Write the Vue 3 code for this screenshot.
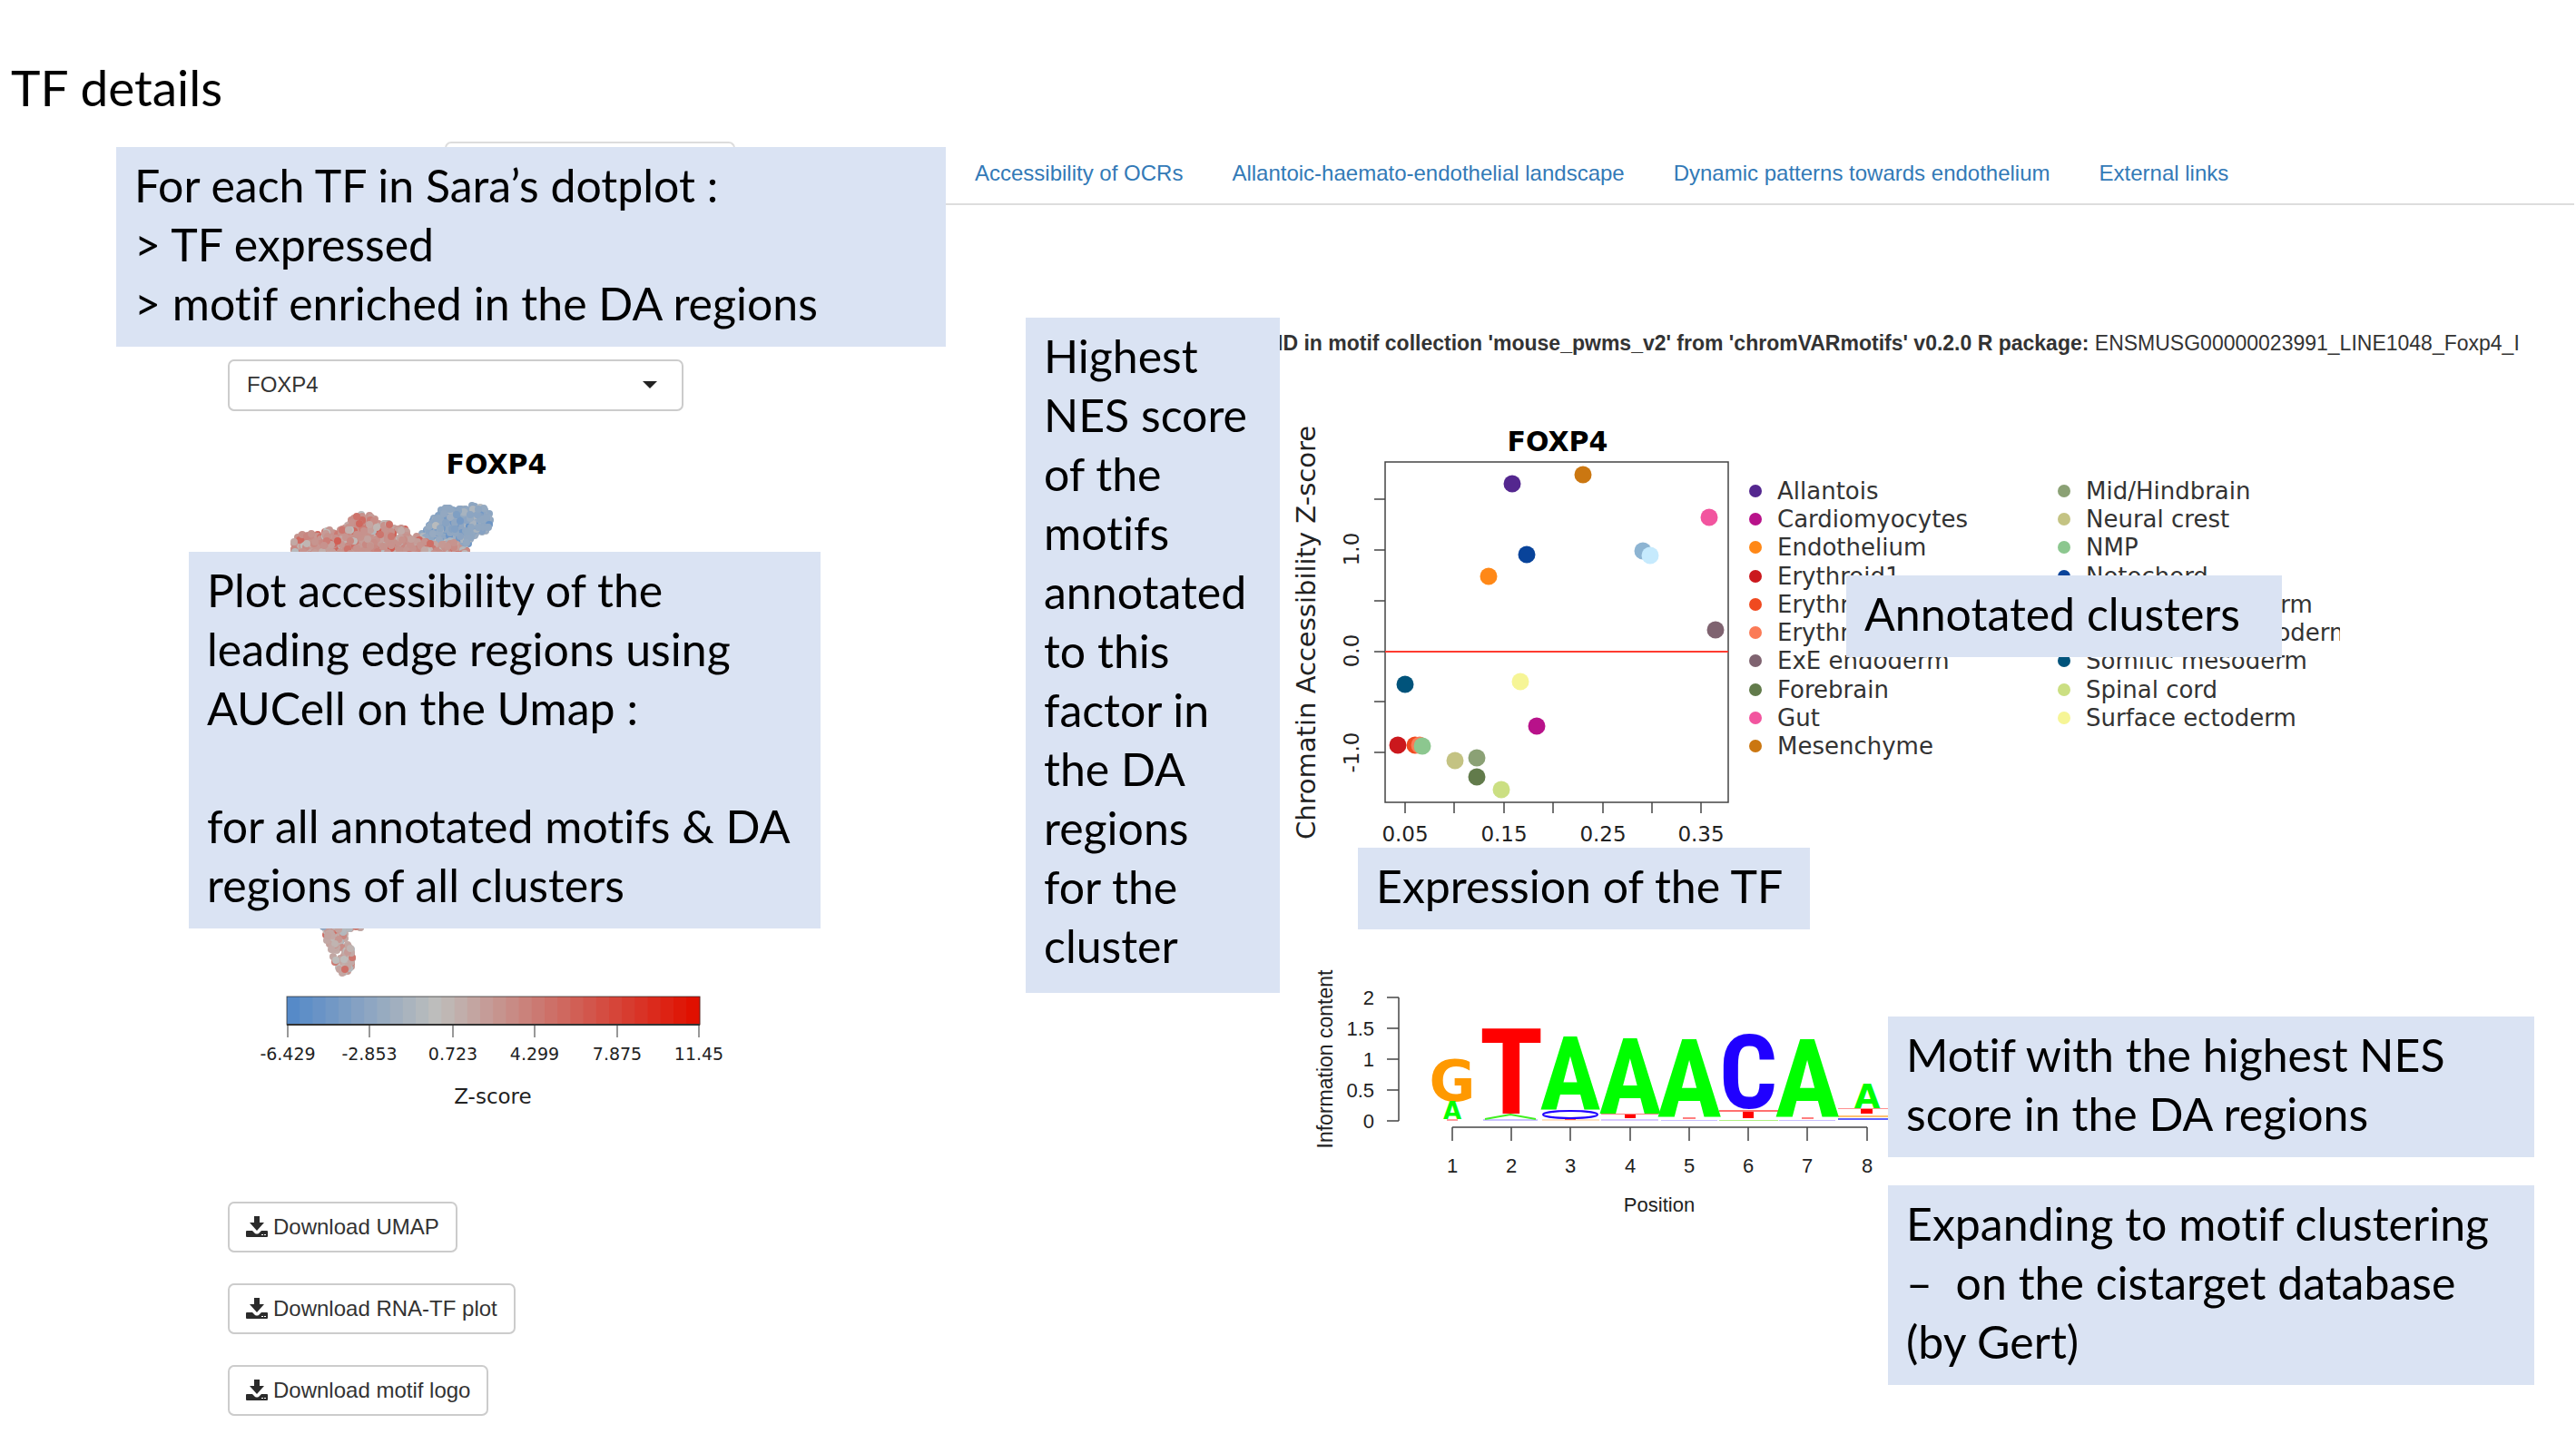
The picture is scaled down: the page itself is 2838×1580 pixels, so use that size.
<script setup>
import { ref } from 'vue'

const factor = ref('FOXP4')
const tabs = [
  'Accessibility of OCRs',
  'Allantoic-haemato-endothelial landscape',
  'Dynamic patterns towards endothelium',
  'External links',
]
const downloads = ['Download UMAP', 'Download RNA-TF plot', 'Download motif logo']

const clusters = [
  { name: 'Allantois', color: '#54278f', x: 1666, y: 533 },
  { name: 'Cardiomyocytes', color: '#b8128a', x: 1693, y: 800 },
  { name: 'Endothelium', color: '#ff8817', x: 1640, y: 635 },
  { name: 'Erythroid1', color: '#cb181d', x: 1540, y: 821 },
  { name: 'Erythroid2', color: '#f04a20', x: 1559, y: 821 },
  { name: 'Erythroid3', color: '#fb7b57', x: 1564, y: 821 },
  { name: 'ExE endoderm', color: '#7f6370', x: 1890, y: 694 },
  { name: 'Forebrain', color: '#627b4b', x: 1627, y: 856 },
  { name: 'Gut', color: '#f2559f', x: 1883, y: 570 },
  { name: 'Mesenchyme', color: '#cb7711', x: 1744, y: 523 },
  { name: 'Mid/Hindbrain', color: '#8ba175', x: 1627, y: 835 },
  { name: 'Neural crest', color: '#c4c383', x: 1603, y: 838 },
  { name: 'NMP', color: '#8cc78f', x: 1567, y: 822 },
  { name: 'Notochord', color: '#08439a', x: 1682, y: 611 },
  { name: 'Paraxial mesoderm', color: '#8db4d2', x: 1810, y: 607 },
  { name: 'Pharyngeal mesoderm', color: '#c6eafd', x: 1818, y: 612 },
  { name: 'Somitic mesoderm', color: '#00537b', x: 1548, y: 754 },
  { name: 'Spinal cord', color: '#cbdf82', x: 1654, y: 870 },
  { name: 'Surface ectoderm', color: '#f6f596', x: 1675, y: 751 },
]
const xTicks = [1548, 1602, 1657, 1711, 1766, 1820, 1874]
const xLabels = [
  { x: 1548, t: '0.05' },
  { x: 1657, t: '0.15' },
  { x: 1766, t: '0.25' },
  { x: 1874, t: '0.35' },
]
const yTicks = [550, 606, 662, 718, 773, 829]
const yLabels = [
  { y: 605, t: '1.0' },
  { y: 717, t: '0.0' },
  { y: 829, t: '-1.0' },
]

/* colour scale: blue - grey - red, 32 steps, grey at a z-score of zero */
function scale(t) {
  const low = [86, 138, 200]
  const mid = [190, 190, 188]
  const high = [224, 16, 0]
  const z = 0.36
  const [a, b, k] = t < z ? [low, mid, t / z] : [mid, high, (t - z) / (1 - z)]
  return `rgb(${a.map((v, i) => Math.round(v + (b[i] - v) * k)).join(',')})`
}
const steps = Array.from({ length: 32 }, (_, i) => ({ x: 316 + i * 14.2, fill: scale(i / 31) }))
const barTicks = [
  { x: 317, t: '-6.429' },
  { x: 407, t: '-2.853' },
  { x: 499, t: '0.723' },
  { x: 589, t: '4.299' },
  { x: 680, t: '7.875' },
  { x: 770, t: '11.45' },
]

/* cells of the embedding, scattered inside each cluster's outline */
let seed = 11
const rnd = () => {
  seed = (seed * 1664525 + 1013904223) % 4294967296
  return seed / 4294967296
}
function inside(p, poly) {
  let hit = false
  for (let i = 0, j = poly.length - 1; i < poly.length; j = i++) {
    const [xi, yi] = poly[i]
    const [xj, yj] = poly[j]
    if (yi > p[1] !== yj > p[1] && p[0] < ((xj - xi) * (p[1] - yi)) / (yj - yi) + xi) hit = !hit
  }
  return hit
}
function cells(poly, n, mean, spread) {
  const xs = poly.map((p) => p[0])
  const ys = poly.map((p) => p[1])
  const x0 = Math.min(...xs)
  const y0 = Math.min(...ys)
  const w = Math.max(...xs) - x0
  const h = Math.max(...ys) - y0
  const out = []
  while (out.length < n) {
    const p = [x0 + rnd() * w, y0 + rnd() * h]
    if (!inside(p, poly)) continue
    const t = mean + (2 * rnd() - 1) ** 3 * spread
    out.push({ x: Math.round(p[0]), y: Math.round(p[1]), fill: scale(Math.max(0, t)) })
  }
  return out
}
const red = [[324, 616], [324, 597], [328, 590], [338, 587], [349, 589], [361, 583], [369, 586], [382, 580], [387, 570], [397, 567], [407, 567], [416, 575], [430, 577], [441, 580], [456, 590], [480, 600], [500, 598], [514, 606], [514, 616]]
const blue = [[462, 592], [472, 580], [484, 562], [490, 559], [512, 561], [520, 556], [533, 559], [540, 566], [541, 575], [538, 583], [524, 590], [514, 602], [512, 612], [490, 600]]
const tail = [[348, 1016], [359, 1034], [361, 1042], [366, 1057], [373, 1069], [380, 1076], [385, 1073], [391, 1055], [388, 1047], [382, 1037], [382, 1026], [406, 1021], [404, 1016]]
const umap = [
  ...cells(blue, 420, 0.2, 0.14),
  ...cells(red, 800, 0.52, 0.2),
  ...cells(tail, 110, 0.44, 0.24),
]

/* sequence logo: one entry per letter, size follows its information content */
const green = '#00ff00'
const letters = [
  { c: 'G', x: 1600, y: 1213, s: 62, f: '#ff9900', wide: true },
  { c: 'A', x: 1600, y: 1233, s: 26, f: green, wide: true },
  { c: 'T', x: 1665, y: 1227, s: 131, f: '#ff0000' },
  { c: 'A', x: 1730, y: 1223, s: 113, f: green },
  { c: 'A', x: 1796, y: 1227, s: 116, f: green },
  { c: 'A', x: 1861, y: 1231, s: 120, f: green },
  { c: 'C', x: 1926, y: 1221, s: 113, f: '#2000ff' },
  { c: 'A', x: 1991, y: 1231, s: 120, f: green },
  { c: 'A', x: 2057, y: 1221, s: 37, f: green, wide: true },
]
/* remainders too flat to be read as letters */
const remainders = [
  { x: 1594, y: 1233, w: 12, h: 2, f: '#ff9a9a' },
  { x: 1634, y: 1233, w: 60, h: 2, f: '#c8c0ff' },
  { x: 1699, y: 1233, w: 63, h: 2, f: '#ffe0c0' },
  { x: 1724, y: 1232, w: 12, h: 2, f: '#ff5050' },
  { x: 1764, y: 1227, w: 63, h: 1, f: '#ff8080' },
  { x: 1790, y: 1228, w: 12, h: 4, f: '#ff0000' },
  { x: 1764, y: 1233, w: 63, h: 2, f: '#d8c8ff' },
  { x: 1854, y: 1231, w: 14, h: 2, f: '#ff8080' },
  { x: 1830, y: 1234, w: 62, h: 1, f: '#c8c0ff' },
  { x: 1894, y: 1223, w: 65, h: 2, f: '#ff7070' },
  { x: 1920, y: 1225, w: 12, h: 7, f: '#ff0000' },
  { x: 1894, y: 1234, w: 65, h: 1, f: '#b0f080' },
  { x: 1985, y: 1231, w: 13, h: 2, f: '#ff8080' },
  { x: 1960, y: 1234, w: 62, h: 1, f: '#c8c0ff' },
  { x: 2025, y: 1221, w: 63, h: 1, f: '#ff9090' },
  { x: 2050, y: 1222, w: 13, h: 5, f: '#ff0000' },
  { x: 2025, y: 1229, w: 63, h: 2, f: '#ffc070' },
  { x: 2025, y: 1232, w: 63, h: 2, f: '#6060ff' },
]
const contentTicks = [
  { y: 1099, t: '2' },
  { y: 1133, t: '1.5' },
  { y: 1167, t: '1' },
  { y: 1201, t: '0.5' },
  { y: 1235, t: '0' },
]
const positions = [1600, 1665, 1730, 1796, 1861, 1926, 1991, 2057]
</script>

<template>
  <main class="page">
    <h1>TF details</h1>

    <nav class="tabs">
      <span class="tab-active"></span>
      <a v-for="t in tabs" :key="t" class="tab" href="#">{{ t }}</a>
    </nav>

    <div class="content">
      <section class="side">
        <div class="picker">
          <select v-model="factor" aria-label="Transcription factor">
            <option>FOXP4</option>
          </select>
        </div>

        <svg class="umap" viewBox="251 480 600 760" role="img" aria-label="UMAP">
          <text class="plot-title" x="547" y="522">FOXP4</text>
          <circle v-for="(c, i) in umap" :key="i" :cx="c.x" :cy="c.y" r="4" :fill="c.fill" />
          <rect v-for="s in steps" :key="s.x" :x="s.x" y="1098" width="15" height="31" :fill="s.fill" />
          <rect x="316" y="1098" width="455" height="31" fill="none" stroke="#222" stroke-opacity="0.7" />
          <g stroke="#333">
            <line x1="316" x2="771" y1="1129" y2="1129" stroke-width="2" />
            <line v-for="b in barTicks" :key="b.t" :x1="b.x" :x2="b.x" y1="1129" y2="1143" />
          </g>
          <text v-for="b in barTicks" :key="b.t" class="bar-label" :x="b.x" y="1168">{{ b.t }}</text>
          <text class="bar-name" x="543" y="1216">Z-score</text>
        </svg>

        <div class="downloads">
          <button v-for="d in downloads" :key="d" type="button">
            <svg width="24" height="24" viewBox="0 0 24 24" fill="#2b2b2b">
              <path d="M9 0h6v7h5l-8 9-8-9h5z" />
              <path fill-rule="evenodd" d="M1 16h6l3 3q2 1 4 0l3-3h6q1 0 1 1v5q0 1-1 1H1q-1 0-1-1v-5q0-1 1-1zM17 20v1h2v-1zM20 20v1h2v-1z" />
            </svg>
            {{ d }}
          </button>
        </div>
      </section>

      <section class="results">
        <p class="motif-id">
          <b>ID in motif collection 'mouse_pwms_v2' from 'chromVARmotifs' v0.2.0 R package:</b>
          ENSMUSG00000023991_LINE1048_Foxp4_I
        </p>

        <div class="scatter">
          <svg class="plot" viewBox="1407 440 520 500" role="img" aria-label="Accessibility against expression">
            <text class="plot-title" x="1716" y="497">FOXP4</text>
            <text class="axis-name" transform="translate(1449 697) rotate(-90)">Chromatin Accessibility Z-score</text>
            <g stroke="#444" stroke-width="1.5" fill="none">
              <rect x="1526" y="509" width="378" height="375" />
              <line v-for="y in yTicks" :key="y" x1="1514" x2="1526" :y1="y" :y2="y" />
              <line v-for="x in xTicks" :key="x" :x1="x" :x2="x" y1="884" y2="896" />
            </g>
            <line x1="1526" x2="1904" y1="718" y2="718" stroke="#ff3b30" stroke-width="2" />
            <text v-for="l in yLabels" :key="l.t" class="tick" :transform="`translate(1497 ${l.y}) rotate(-90)`">{{ l.t }}</text>
            <text v-for="l in xLabels" :key="l.t" class="tick" :x="l.x" y="927">{{ l.t }}</text>
            <circle v-for="c in clusters" :key="c.name" :cx="c.x" :cy="c.y" r="9.5" :fill="c.color" />
          </svg>
          <ul class="legend">
            <li v-for="c in clusters" :key="c.name">
              <i :style="{ background: c.color }"></i>{{ c.name }}
            </li>
          </ul>
        </div>

        <svg class="logo" viewBox="1407 1050 700 300" role="img" aria-label="Motif logo">
          <text class="content-name" transform="translate(1468 1167) rotate(-90)">Information content</text>
          <g stroke="#444" stroke-width="1.5">
            <line x1="1541" x2="1541" y1="1099" y2="1235" />
            <line v-for="c in contentTicks" :key="c.t" x1="1528" x2="1541" :y1="c.y" :y2="c.y" />
            <line x1="1600" x2="2057" y1="1242" y2="1242" />
            <line v-for="x in positions" :key="x" :x1="x" :x2="x" y1="1242" y2="1257" />
          </g>
          <text v-for="c in contentTicks" :key="c.t" class="content-tick" x="1514" :y="c.y + 8">{{ c.t }}</text>
          <text v-for="(x, i) in positions" :key="x" class="position" :x="x" y="1292">{{ i + 1 }}</text>
          <text class="position" x="1828" y="1335">Position</text>
          <rect v-for="(r, i) in remainders" :key="i" :x="r.x" :y="r.y" :width="r.w" :height="r.h" :fill="r.f" />
          <ellipse cx="1730" cy="1228" rx="30" ry="4" fill="none" stroke="#2000ff" stroke-width="2" />
          <path d="M1636 1233l28-5 28 5" fill="none" stroke="#40f020" stroke-width="2" />
          <text v-for="(l, i) in letters" :key="i" :class="['base', { wide: l.wide }]" :x="l.x" :y="l.y" :style="{ fontSize: l.s + 'px', fill: l.f }">{{ l.c }}</text>
        </svg>
      </section>
    </div>

    <aside class="note note-dotplot">For each TF in Sara’s dotplot :<br />&gt; TF expressed<br />&gt; motif enriched in the DA regions</aside>
    <aside class="note note-umap">Plot accessibility of the<br />leading edge regions using<br />AUCell on the Umap :<br /><br />for all annotated motifs &amp; DA<br />regions of all clusters</aside>
    <aside class="note note-nes">Highest<br />NES score<br />of the<br />motifs<br />annotated<br />to this<br />factor in<br />the DA<br />regions<br />for the<br />cluster</aside>
    <aside class="note note-clusters">Annotated clusters</aside>
    <aside class="note note-expression">Expression of the TF</aside>
    <aside class="note note-motif">Motif with the highest NES<br />score in the DA regions</aside>
    <aside class="note note-expand">Expanding to motif clustering<br />–&nbsp; on the cistarget database<br />(by Gert)</aside>
  </main>
</template>

<style>
body {
  margin: 0;
  background: #fff;
}
</style>

<style scoped>
.page {
  position: relative;
  overflow: hidden;
  padding-bottom: 20px;
  color: #333;
  font: 24px/34px "Liberation Sans", Arial, sans-serif;
}
h1 {
  margin: 0;
  padding: 58px 12px 0;
  color: #000;
  font: 55px/76px Lato, sans-serif;
}
.tabs {
  display: flex;
  margin: 22px 2px 0 490px;
  border-bottom: 2px solid #ddd;
}
.tab-active {
  width: 316px;
  height: 66px;
  margin-right: 237px;
  border: 2px solid #ddd;
  border-bottom: 0;
  border-radius: 7px 7px 0 0;
}
.tab {
  padding: 18px 27px 14px;
  color: #337ab7;
  text-decoration: none;
}
.content {
  display: grid;
  grid-template-columns: 1156px 1fr;
  padding-left: 251px;
}
.side {
  padding-top: 170px;
}
.picker {
  position: relative;
  width: 502px;
}
.picker::after {
  content: "";
  position: absolute;
  top: 24px;
  right: 29px;
  border: 8px solid transparent;
  border-top-color: #222;
  border-bottom: 0;
  pointer-events: none;
}
select {
  display: block;
  width: 100%;
  height: 57px;
  padding: 0 19px 2px;
  border: 2px solid #ccc;
  border-radius: 7px;
  appearance: none;
  background: #fff;
  color: #333;
  font: inherit;
}
.umap {
  display: block;
  width: 600px;
  height: 760px;
  margin-top: 27px;
}
text {
  font-family: "DejaVu Sans", sans-serif;
  text-anchor: middle;
  fill: #222;
}
.plot-title {
  font-size: 30px;
  font-weight: bold;
  fill: #000;
}
.bar-label {
  font-size: 19px;
}
.bar-name,
.tick {
  font-size: 23px;
}
.axis-name {
  font-size: 29px;
}
.downloads {
  display: flex;
  flex-direction: column;
  align-items: flex-start;
  gap: 34px;
  margin-top: 84px;
}
button {
  display: flex;
  align-items: center;
  gap: 6px;
  height: 56px;
  padding: 0 18px;
  border: 2px solid #ccc;
  border-radius: 7px;
  background: #fff;
  color: #333;
  font: inherit;
}
.results {
  padding-top: 135px;
}
.motif-id {
  margin: 0;
  font-size: 23px;
  white-space: nowrap;
}
.scatter {
  display: flex;
  margin-top: 45px;
}
.plot {
  flex: none;
  width: 520px;
  height: 500px;
}
.legend {
  display: grid;
  grid-auto-flow: column;
  grid-template-columns: 340px 311px;
  grid-template-rows: repeat(10, 1fr);
  align-items: center;
  height: 313px;
  margin: 85px 0 0;
  padding: 0;
  overflow: hidden;
  list-style: none;
  font: 26px/30px "DejaVu Sans", sans-serif;
}
.legend li {
  display: flex;
  align-items: center;
  gap: 17px;
  white-space: nowrap;
}
.legend i {
  flex: none;
  width: 14px;
  height: 14px;
  border-radius: 50%;
}
.logo {
  display: block;
  width: 700px;
  height: 300px;
  margin-top: 110px;
}
.content-name,
.content-tick,
.position {
  font-family: "Liberation Sans", Arial, sans-serif;
  font-size: 22px;
}
.content-name {
  font-size: 23px;
}
.content-tick {
  text-anchor: end;
}
.base {
  font-family: "Roboto Condensed", "Liberation Sans Narrow", sans-serif;
  font-weight: bold;
}
.wide {
  font-family: "DejaVu Sans", sans-serif;
}
.note {
  position: absolute;
  box-sizing: border-box;
  padding: 10px 20px 15px;
  background: #dae3f3;
  color: #000;
  font: 50px/65px Lato, sans-serif;
  font-variant-ligatures: none;
  white-space: nowrap;
}
.note-dotplot {
  top: 162px;
  left: 128px;
  width: 914px;
}
.note-umap {
  top: 608px;
  left: 208px;
  width: 696px;
}
.note-nes {
  top: 350px;
  left: 1130px;
  width: 280px;
  min-height: 744px;
}
.note-clusters {
  top: 634px;
  left: 2034px;
  width: 480px;
}
.note-expression {
  top: 934px;
  left: 1496px;
  width: 498px;
}
.note-motif {
  top: 1120px;
  left: 2080px;
  width: 712px;
}
.note-expand {
  top: 1306px;
  left: 2080px;
  width: 712px;
}
</style>
